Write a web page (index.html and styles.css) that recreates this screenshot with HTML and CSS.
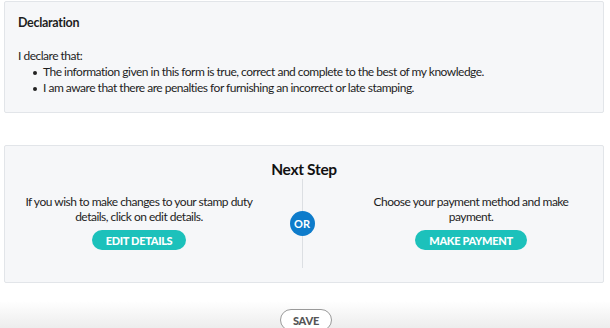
FILE: index.html
```html
<!DOCTYPE html>
<html>
<head>
<meta charset="utf-8">
<link rel="stylesheet" href="styles.css">
</head>
<body>
<div class="page">
  <section class="card declaration">
    <h3 class="decl-title">Declaration</h3>
    <p class="decl-intro">I declare that:</p>
    <ul class="decl-list">
      <li>The information given in this form is true, correct and complete to the best of my knowledge.</li>
      <li>I am aware that there are penalties for furnishing an incorrect or late stamping.</li>
    </ul>
  </section>

  <section class="card next-step">
    <h2 class="ns-title">Next Step</h2>
    <div class="ns-body">
      <div class="ns-col ns-left">
        <p class="ns-text">If you wish to make changes to your stamp duty details, click on edit details.</p>
        <button class="btn-teal">EDIT DETAILS</button>
      </div>
      <div class="ns-divider">
        <span class="ns-line"></span>
        <span class="ns-or">OR</span>
        <span class="ns-line"></span>
      </div>
      <div class="ns-col ns-right">
        <p class="ns-text">Choose your payment method and make payment.</p>
        <button class="btn-teal">MAKE PAYMENT</button>
      </div>
    </div>
  </section>

  <footer class="footer">
    <button class="btn-save">SAVE</button>
  </footer>
</div>
</body>
</html>
```
FILE: styles.css
```css
* { box-sizing: border-box; }
html, body { margin: 0; padding: 0; background: #fff; }
body {
  font-family: "Lato", "Open Sans", sans-serif;
  color: #1e1e1e;
  font-size: 12px;
  letter-spacing: -0.5px;
  overflow: hidden;
  height: 328px;
}
.page { padding: 1px 6px 0 4px; }
.card {
  background: #f6f7f9;
  border: 1px solid #e2e5e9;
  border-radius: 2px;
}
.declaration {
  height: 112px;
  padding: 13px 13px 0 13px;
}
.decl-title {
  margin: 0;
  font-size: 12.5px;
  font-weight: 700;
  letter-spacing: -0.3px;
  line-height: 16px;
}
.decl-intro {
  margin: 17px 0 0 0;
  line-height: 16px;
}
.decl-list {
  margin: 0;
  padding-left: 25px;
  list-style: none;
  line-height: 16px;
}
.decl-list li {
  position: relative;
}
.decl-list li::before {
  content: "";
  position: absolute;
  left: -10px;
  top: 7px;
  width: 4px;
  height: 4px;
  border-radius: 50%;
  background: #222;
}
.next-step {
  margin-top: 32px;
  height: 138px;
  padding-top: 13px;
}
.ns-title {
  margin: 0;
  text-align: center;
  font-size: 15.5px;
  letter-spacing: -0.3px;
  font-weight: 700;
  line-height: 20px;
  color: #111;
}
.ns-body {
  display: grid;
  grid-template-columns: 1fr 24px 1fr;
  padding-right: 4px;
  margin-top: 0;
}
.ns-col {
  min-width: 0;
  display: flex;
  flex-direction: column;
  align-items: center;
  padding-top: 15px;
}
.ns-left { padding-right: 17px; }
.ns-right { padding-left: 29px; }
.ns-text {
  margin: 0;
  text-align: center;
  line-height: 15px;
  width: 240px;
}
.btn-teal {
  margin-top: 6px;
  border: none;
  background: #1cc1bb;
  color: #fff;
  font-family: inherit;
  font-weight: 900;
  font-size: 11px;
  letter-spacing: -0.3px;
  height: 20px;
  padding: 0 14px;
  border-radius: 10px;
}
.ns-divider {
  display: flex;
  flex-direction: column;
  align-items: center;
  height: 89px;
}
.ns-line {
  flex: 1;
  width: 1px;
  background: #dcdfe3;
}
.ns-or {
  width: 25px;
  height: 25px;
  border-radius: 50%;
  background: #0e7ccb;
  color: #fff;
  font-weight: 700;
  font-size: 11px;
  letter-spacing: 0;
  display: flex;
  align-items: center;
  justify-content: center;
}
.footer {
  margin: 18px -6px 0 -4px;
  height: 28px;
  background: linear-gradient(#fff, #ececec);
  display: flex;
  justify-content: center;
  align-items: flex-end;
}
.btn-save {
  margin-bottom: -2px;
  margin-left: 2px;
  width: 52px;
  height: 22px;
  background: #fff;
  border: 1.5px solid #9a9a9a;
  border-radius: 11px;
  font-family: inherit;
  font-weight: 900;
  font-size: 11px;
  letter-spacing: -0.2px;
  color: #555;
  padding: 0;
}
```
